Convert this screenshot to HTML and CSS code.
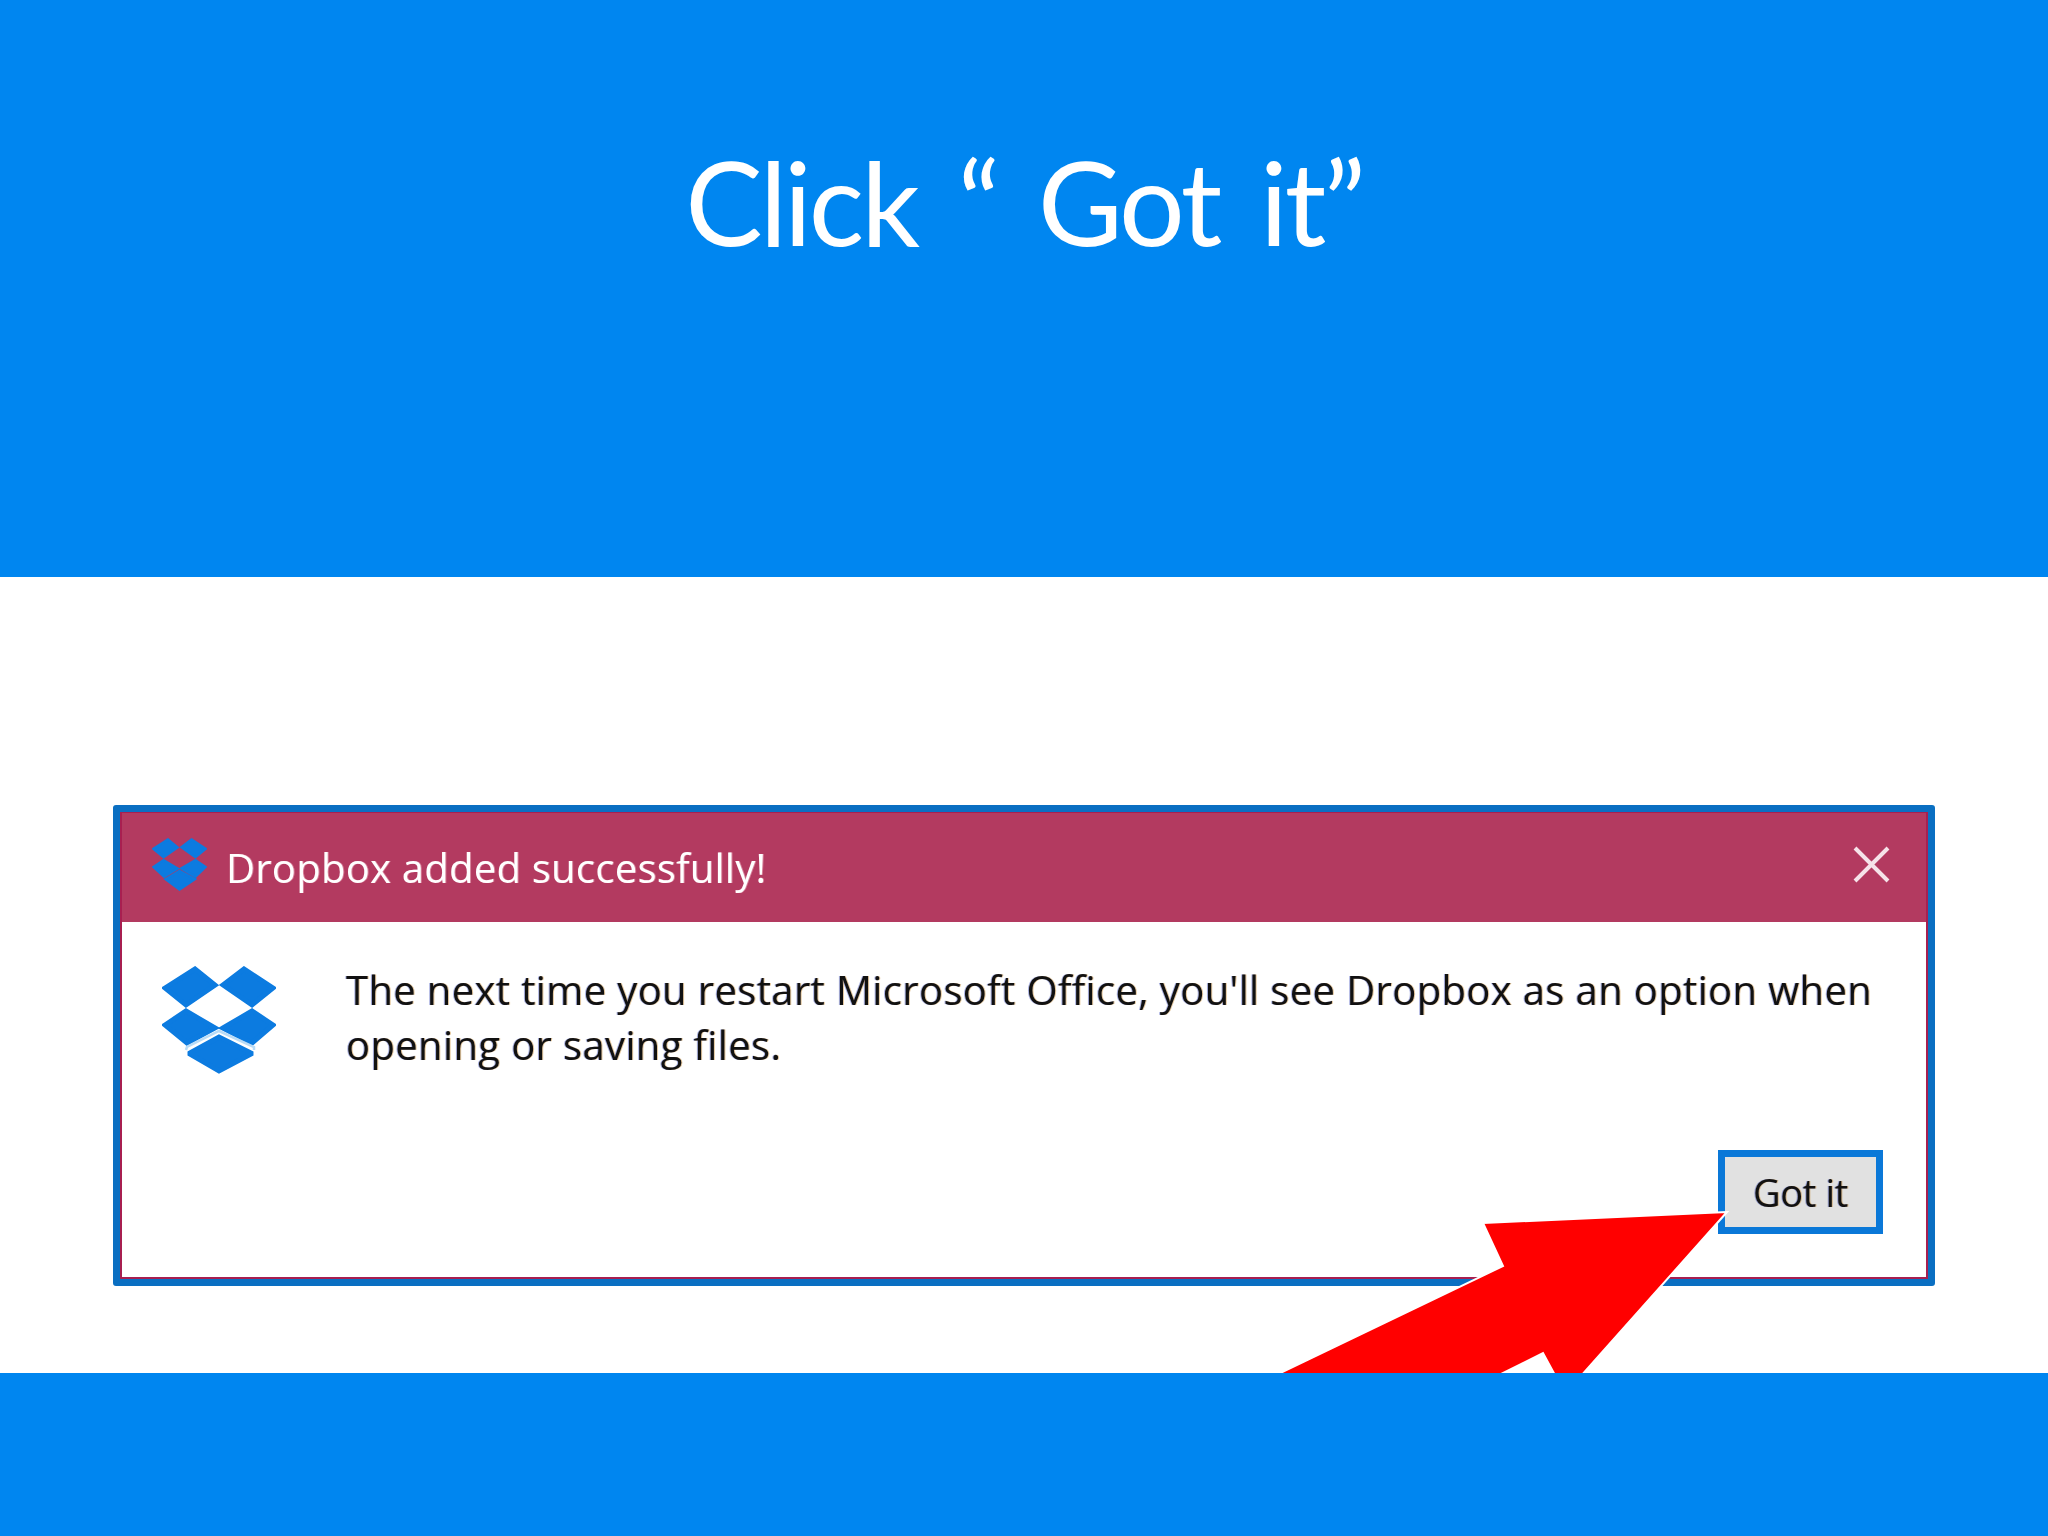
FILE: index.html
```html
<!DOCTYPE html>
<html lang="en">
<head>
<meta charset="utf-8">
<title>Click Got it</title>
<link rel="stylesheet" href="styles.css">
</head>
<body>
<header class="band-top">
  <h1 class="headline">Click “ Got it”</h1>
</header>
<main class="stage">
  <section class="dialog">
    <div class="dialog-inner">
      <div class="titlebar">
        <svg class="logo-small" viewBox="0 0 114 108" preserveAspectRatio="none" aria-hidden="true">
          <polygon class="logo-fill" points="3,22 33,3 53,19 24,39"/>
          <polygon class="logo-fill" points="61,19 82,3 111,22 90,39"/>
          <polygon class="logo-fill" points="3,59 24,45 53,62 25,79"/>
          <polygon class="logo-fill" points="61,62 90,45 111,59 90,79"/>
          <polygon class="logo-fill" points="28,84 57,67 89,84 57,105"/>
        </svg>
        <span class="title-text">Dropbox added successfully!</span>
        <svg class="close" viewBox="0 0 37 37" aria-hidden="true">
          <path d="M2 2 L35 35 M35 2 L2 35"/>
        </svg>
      </div>
      <div class="content">
        <div class="message-row">
          <svg class="logo-large" viewBox="0 0 114 108" aria-hidden="true">
            <polygon class="logo-fill" points="3,22 33,3 53,19 24,39"/>
            <polygon class="logo-fill" points="61,19 82,3 111,22 90,39"/>
            <polygon class="logo-fill" points="3,59 24,45 53,62 25,77"/>
            <polygon class="logo-fill" points="61,62 90,45 111,59 90,77"/>
            <polygon class="logo-fill" points="28,87 57,71 89,87 89,88 57,105 28,88"/>
            <polyline class="logo-line" points="24,84 25,81 57,65 92,81 92,84"/>
          </svg>
          <p class="message">The next time you restart Microsoft Office, you'll see Dropbox as an option when opening or saving files.</p>
        </div>
        <div class="actions">
          <button class="got-it" type="button"><span class="got-it-label">Got it</span></button>
        </div>
      </div>
    </div>
  </section>
  <svg class="arrow" viewBox="0 0 2048 796" aria-hidden="true">
    <polygon points="1727,635 1483,646 1503,689 1272,800 1495,800 1543,776 1556,800 1580,800"/>
  </svg>
</main>
<footer class="band-bottom"></footer>
</body>
</html>
```

FILE: styles.css
```css
* { box-sizing: border-box; }

html, body { margin: 0; height: 100%; }

body {
  width: 2048px;
  height: 1536px;
  display: flex;
  flex-direction: column;
  background: #fff;
  overflow: hidden;
  font-family: "Open Sans", "Noto Sans", sans-serif;
}

.band-top {
  height: 577px;
  background: #0086f0;
  display: flex;
  justify-content: center;
  padding-top: 137px;
}

.headline {
  margin: 0;
  font-family: Lato, "Open Sans", sans-serif;
  font-weight: 400;
  font-size: 116px;
  line-height: 130px;
  letter-spacing: -3px;
  word-spacing: 14px;
  color: #fff;
}

.stage {
  flex: 1;
  position: relative;
  overflow: hidden;
  padding: 228px 113px 0;
}

.band-bottom {
  height: 163px;
  background: #0086f0;
}

.dialog {
  width: 1822px;
  height: 481px;
  border: 7px solid #0a6fc2;
  border-radius: 3px;
}

.dialog-inner {
  height: 100%;
  border: 2px solid #a81f50;
  border-top-width: 1px;
  display: flex;
  flex-direction: column;
}

.titlebar {
  height: 109px;
  background: #b33a60;
  display: flex;
  align-items: center;
  padding: 0 36px 0 30px;
  flex: none;
}

.logo-small { width: 55px; height: 53px; margin-right: 19px; margin-top: -6px; flex: none; filter: blur(0.6px); }

.logo-fill { fill: #0c7be0; stroke: #0c7be0; stroke-width: 5; stroke-linejoin: miter; }

.logo-line { fill: none; stroke: #b9dcf7; stroke-width: 2.5; }

.logo-large { width: 114px; height: 108px; flex: none; filter: blur(0.5px); }

.title-text {
  flex: 1;
  font-size: 40px;
  letter-spacing: 0.25px;
  color: #fff;
  filter: blur(0.5px);
  text-shadow: 1px 0 rgba(255, 210, 220, 0.45);
}

.close { width: 37px; height: 37px; margin-top: -6px; flex: none; }

.close path { fill: none; stroke: #f6e3e9; stroke-width: 4; }

.content {
  flex: 1;
  display: flex;
  flex-direction: column;
  justify-content: space-between;
  padding: 44px 43px 43px 40px;
  background: #fff;
}

.message-row { display: flex; gap: 70px; align-items: flex-start; }

.message {
  margin: -4px 0 0;
  font-size: 40px;
  line-height: 55px;
  letter-spacing: 0.36px;
  color: #111;
  filter: blur(0.5px);
  text-shadow: 1px 0 rgba(190, 120, 20, 0.4), -1px 0 rgba(20, 40, 170, 0.35);
}

.actions { display: flex; justify-content: flex-end; }

.got-it {
  width: 165px;
  height: 84px;
  border: 7px solid #0a78d8;
  background: #e1e1e1;
  padding: 0;
  font-family: inherit;
  font-size: 38px;
  letter-spacing: -0.3px;
  color: #111;
}

.got-it-label {
  display: block;
  filter: blur(0.5px);
  text-shadow: 1px 0 rgba(190, 120, 20, 0.4), -1px 0 rgba(20, 40, 170, 0.35);
}

.arrow {
  position: absolute;
  left: 0;
  top: 0;
  width: 2048px;
  height: 796px;
}

.arrow polygon { fill: #ff0000; stroke: #fff; stroke-width: 2; }
```
